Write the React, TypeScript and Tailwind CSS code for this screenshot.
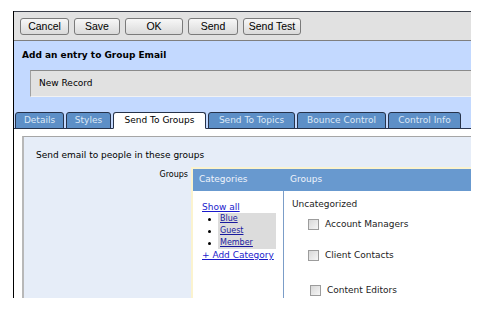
export default function App() {
  const buttons = [
    { label: "Cancel", w: "w-[49px]" },
    { label: "Save", w: "w-[46px]" },
    { label: "OK", w: "w-[58px]" },
    { label: "Send", w: "w-[50px]" },
    { label: "Send Test", w: "w-[58px]" },
  ];

  const tabs = [
    { label: "Details", w: "w-[49px]" },
    { label: "Styles", w: "w-[45px]" },
    { label: "Send To Groups", w: "w-[93px]", active: true },
    { label: "Send To Topics", w: "w-[87px]" },
    { label: "Bounce Control", w: "w-[89px]" },
    { label: "Control Info", w: "w-[73px]" },
  ];

  const groups = [
    { label: "Account Managers", mt: "mt-[8px]", ml: "ml-[16px]" },
    { label: "Client Contacts", mt: "mt-[19px]", ml: "ml-[16px]" },
    { label: "Content Editors", mt: "mt-[23px]", ml: "ml-[18px]" },
  ];

  return (
    <div className="h-[319px] w-[496px] overflow-hidden bg-white pl-[13px] pt-[11px] font-['DejaVu_Sans',Verdana,sans-serif] text-[9px] text-black">
      <div className="w-[458px] border-l border-black">
        {/* Toolbar */}
        <div className="flex h-[30px] gap-[5px] border-t border-b border-t-[#3a3f4a] border-b-[#7f7f7f] bg-[#e1e1e1] pl-[6px] pt-[6px]">
          {buttons.map((b) => (
            <button
              key={b.label}
              className={`${b.w} h-[17px] rounded-[3px] border border-[#7a7a7a] bg-gradient-to-b from-[#f7f7f7] to-[#dadada] font-['Liberation_Sans',Arial,sans-serif] text-[10.5px] leading-none text-black`}
            >
              {b.label}
            </button>
          ))}
        </div>

        {/* Title */}
        <div className="flex h-[29px] items-center bg-[#c3d9ff] pl-[8px] font-bold">
          Add an entry to Group Email
        </div>

        {/* Record name */}
        <div className="bg-[#c3d9ff] pl-[16px]">
          <div className="flex h-[27px] items-center border-t border-l border-b border-t-[#8a8a8a] border-l-[#a0a0a0] border-b-[#f2f2f2] bg-[#e1e1e1] pl-[8px]">
            New Record
          </div>
        </div>

        {/* Tabs */}
        <div className="flex h-[32px] items-end gap-[2px] border-b border-[#2a3550] bg-[#c3d9ff] pl-[1px]">
          {tabs.map((t) => (
            <div
              key={t.label}
              className={`${t.w} -mb-px flex h-[17px] items-center justify-center rounded-t-[3px] border border-[#26324a] ${
                t.active
                  ? "border-b-white bg-white text-black"
                  : "bg-[#5d8fc7] text-[#dce8f6]"
              }`}
            >
              {t.label}
            </div>
          ))}
        </div>

        {/* Tab content */}
        <div className="bg-white pl-[8px] pt-[7px]">
          <div className="h-[162px] overflow-hidden border-t border-l-2 border-t-[#a6a6a6] border-l-[#b8b8b8] bg-[#e6edf8]">
            <div className="pl-[12px] pt-[12px] leading-[12px]">
              Send email to people in these groups
            </div>

            <div className="mt-[6px] flex">
              <div className="w-[167px] pt-[3px] pr-[3px] text-right text-[8px] leading-[10px]">
                Groups
              </div>

              <div className="flex h-[140px] flex-1 flex-col border-t-2 border-l-2 border-[#fbf3cf]">
                <div className="flex h-[22px] items-center bg-[#6899cf] text-[#eef3fb]">
                  <div className="w-[91px] pl-[6px]">Categories</div>
                  <div className="pl-[6px]">Groups</div>
                </div>

                <div className="flex flex-1 bg-white">
                  {/* Categories column */}
                  <div className="w-[91px] border-r border-[#7b9dc8] pl-[9px] pt-[11px]">
                    <a className="block leading-[11px] text-[#1a1acc] underline">Show all</a>
                    <div className="flex">
                      <div className="flex w-[16px] flex-col pl-[6px]">
                        {[0, 1, 2].map((i) => (
                          <div key={i} className="flex h-[12px] items-center">
                            <div className="h-[3px] w-[3px] rounded-full bg-black" />
                          </div>
                        ))}
                      </div>
                      <div className="w-[58px] bg-[#dcdcdc] pl-[2px]">
                        {["Blue", "Guest", "Member"].map((c) => (
                          <a
                            key={c}
                            className="block text-[8px] leading-[12px] text-[#1a1a9e] underline"
                          >
                            {c}
                          </a>
                        ))}
                      </div>
                    </div>
                    <a className="block leading-[12px] text-[#1a1acc] underline">+ Add Category</a>
                  </div>

                  {/* Groups column */}
                  <div className="flex-1 pl-[8px] pt-[7px] text-[#222]">
                    <div className="leading-[12px]">Uncategorized</div>
                    {groups.map((g) => (
                      <div key={g.label} className={`${g.mt} ${g.ml} flex items-center gap-[6px] leading-[12px]`}>
                        <div className="h-[11px] w-[11px] border border-[#9c9c9c] bg-gradient-to-br from-[#d8d8d8] to-[#f6f6f6]" />
                        <span>{g.label}</span>
                      </div>
                    ))}
                  </div>
                </div>
              </div>
            </div>
          </div>
        </div>
      </div>
    </div>
  );
}
